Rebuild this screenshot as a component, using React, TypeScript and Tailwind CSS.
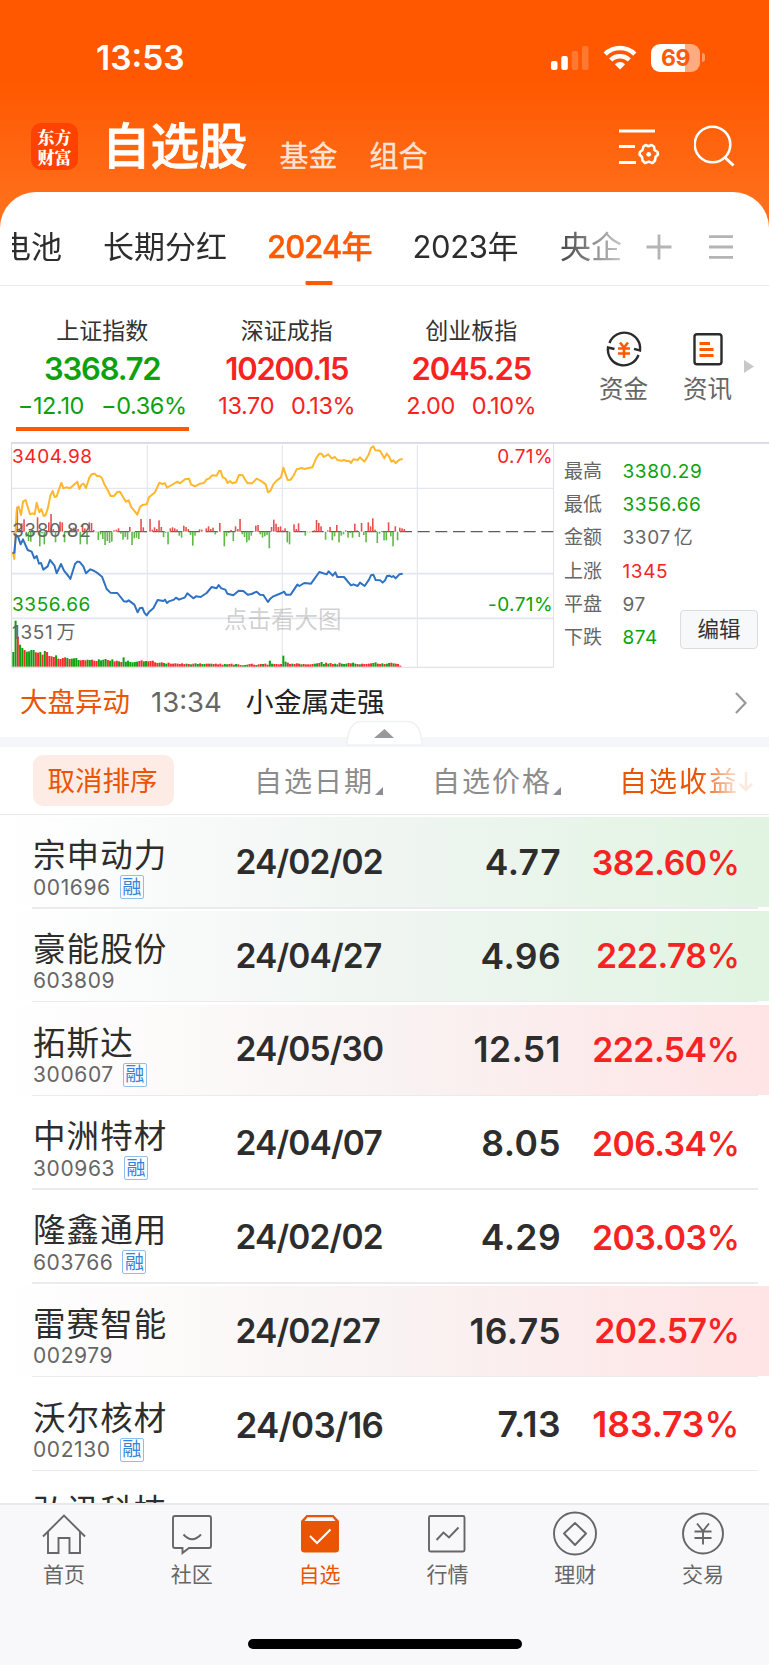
import React, { useState } from "react";

type Tone = "up" | "down" | "flat";

interface IndexItem {
  name: string;
  value: string;
  change: string;
  percent: string;
  tone: Tone;
}

interface Stock {
  name: string;
  code: string;
  margin: boolean;
  date: string;
  price: string;
  profit: string;
  flash?: "green" | "red";
}

const toneText = {
  up: "text-[#f72323]",
  down: "text-[#0da10d]",
  flat: "text-[#666]",
};

const indices: IndexItem[] = [
  { name: "上证指数", value: "3368.72", change: "−12.10", percent: "−0.36%", tone: "down" },
  { name: "深证成指", value: "10200.15", change: "13.70", percent: "0.13%", tone: "up" },
  { name: "创业板指", value: "2045.25", change: "2.00", percent: "0.10%", tone: "up" },
];

const stats: { label: string; value: string; unit?: string; tone: Tone }[] = [
  { label: "最高", value: "3380.29", tone: "down" },
  { label: "最低", value: "3356.66", tone: "down" },
  { label: "金额", value: "3307", unit: "亿", tone: "flat" },
  { label: "上涨", value: "1345", tone: "up" },
  { label: "平盘", value: "97", tone: "flat" },
  { label: "下跌", value: "874", tone: "down" },
];

const stocks: Stock[] = [
  { name: "宗申动力", code: "001696", margin: true, date: "24/02/02", price: "4.77", profit: "382.60", flash: "green" },
  { name: "豪能股份", code: "603809", margin: false, date: "24/04/27", price: "4.96", profit: "222.78", flash: "green" },
  { name: "拓斯达", code: "300607", margin: true, date: "24/05/30", price: "12.51", profit: "222.54", flash: "red" },
  { name: "中洲特材", code: "300963", margin: true, date: "24/04/07", price: "8.05", profit: "206.34" },
  { name: "隆鑫通用", code: "603766", margin: true, date: "24/02/02", price: "4.29", profit: "203.03" },
  { name: "雷赛智能", code: "002979", margin: false, date: "24/02/27", price: "16.75", profit: "202.57", flash: "red" },
  { name: "沃尔核材", code: "002130", margin: true, date: "24/03/16", price: "7.13", profit: "183.73" },
];

// chart units: three per pixel
const leadLine =
  "38,350 43,372 50,225 56,215 63,240 69,200 77,195 83,215 90,238 98,235 104,238 110,203 118,232 124,222 131,243 137,240 144,218 151,182 158,168 164,186 170,184 178,160 184,143 190,160 198,157 210,160 232,140 238,162 245,148 251,146 258,159 268,128 275,118 284,116 291,123 298,123 306,129 313,148 320,160 332,183 342,183 352,171 360,170 366,181 378,200 386,196 393,215 412,239 420,216 427,210 440,208 447,187 465,172 478,143 487,147 495,145 501,158 520,147 532,140 540,145 555,133 567,131 573,148 585,154 600,146 612,144 620,133 628,130 636,121 650,122 657,108 662,107 668,127 676,130 683,144 690,138 697,145 708,142 717,120 728,121 736,135 743,145 756,145 770,131 785,139 797,148 804,172 812,166 820,148 830,137 843,127 850,98 863,135 872,134 880,123 890,103 905,99 913,102 937,97 948,71 958,56 965,56 971,66 985,58 995,70 1005,66 1012,75 1025,77 1032,75 1040,78 1048,78 1053,84 1060,73 1073,75 1080,67 1093,80 1106,59 1113,39 1120,34 1126,46 1140,47 1153,70 1160,56 1167,64 1174,80 1180,76 1187,84 1198,74 1208,72";
const indexLine =
  "38,355 43,353 48,300 54,305 62,328 69,313 83,345 95,350 103,370 110,363 117,386 123,384 130,404 143,394 150,375 163,391 170,415 183,387 192,407 205,423 211,432 225,387 232,380 238,380 250,394 258,415 271,403 283,408 295,416 306,425 320,462 331,473 352,474 372,499 380,500 386,496 403,509 413,532 419,520 427,518 433,533 440,541 447,531 460,520 473,495 490,498 495,494 501,504 507,499 522,494 528,488 537,494 555,487 562,475 580,490 588,484 602,486 620,474 635,456 650,460 656,450 664,460 676,464 682,476 700,481 716,467 730,468 743,479 755,477 770,470 780,479 790,480 804,501 811,491 820,484 845,474 852,470 858,479 872,479 892,449 898,453 913,444 933,446 958,411 980,418 986,409 998,422 1006,412 1012,426 1032,426 1053,451 1060,448 1073,453 1080,443 1094,453 1107,434 1113,421 1120,419 1127,435 1141,436 1148,443 1155,436 1161,423 1168,422 1175,426 1180,423 1187,430 1198,418 1208,416";

const ticks = [
  0, 0, 75, 0, 25, 37, -15, -28, -30, -10, 0, 43, -44, -5, -38, 5, 28, 53, 8, -32, 0, 30, 28, -32, -3, -10, 10, 12, 15, 8,
  -38, 20, 10, -38, 28, 26, 5, -2, -25, -8, -22, -40, -28, -34, -30, 4, 6, 10, -6, -24, -16, -24, 14, -40, -20, -18, -22,
  38, 13, -2, 0, 38, 6, 13, 8, 34, 14, -16, -3, -38, 10, 13, 10, 7, -12, -18, 18, 14, 8, -10, -42, -12, 0, 7, 6, 0, 10, 16,
  8, 12, -8, -2, 26, 0, -44, -14, -4, 5, -28, 16, 8, 38, -8, -16, -32, -26, -12, 2, 18, 20, -8, -18, -14, -10, -50, 14, 36,
  24, 14, 16, 4, 10, -32, -38, 0, 22, 8, 25, 0, 2, -12, -2, -2, 0, 4, 35, 26, 16, 0, -24, 4, 14, -26, -14, 20, -32, -12, -8,
  4, -18, -4, -18, 24, 4, -16, 26, -10, -32, 28, 16, 40, 6, -34, -6, 2, -26, -26, 28, -14, -44, 16, -26, 12, 10, 8,
];

const volumes = [
  44, 138, 90, 66, 56, 50, 45, 46, 50, 50, 43, 42, 44, 36, 47, 44, 32, 31, 29, 34, 24, 23, 26, 28, 26, 23, 24, 25, 26, 20, 19,
  20, 19, 21, 20, 21, 18, 17, 22, 19, 21, 23, 20, 18, 22, 16, 18, 16, 14, 28, 15, 18, 14, 13, 14, 15, 17, 19, 16, 17, 16, 17,
  18, 13, 11, 12, 13, 11, 9, 12, 9, 9, 10, 9, 8, 10, 8, 9, 8, 7, 9, 10, 8, 10, 8, 8, 9, 9, 9, 8, 9, 7, 9, 6, 8, 7, 8, 9, 6,
  8, 7, 5, 4, 5, 6, 8, 9, 6, 5, 7, 8, 8, 9, 6, 18, 9, 8, 8, 7, 8, 33, 15, 12, 8, 9, 8, 10, 9, 7, 8, 7, 7, 7, 8, 9, 10, 11, 14,
  8, 12, 9, 11, 8, 9, 7, 12, 9, 8, 9, 11, 10, 12, 9, 8, 7, 9, 8, 8, 9, 10, 11, 13, 9, 8, 10, 8, 9, 11, 12, 10, 9, 8, 3,
];
// which minutes closed lower, one letter per bar
const volumeTones =
  "ggrggrggggrrgrgrrrrgrrrrgrggggrrrggrrrggggrggrrgrgggggggrrggrrrrrgrggrrrrrrrrgrgrggrggrrgrrrrrggrrggrrgggrrrgrrgrrggrrrrggrrgrrrgrrrrrggrggrgrrggrgggrrggrgrrrrrggrrgrggrgrr";

function MarketChart() {
  return (
    <svg className="block w-[543px] h-[226px]" viewBox="33 21 1629 678" fill="none">
      <path d="M442 30V698M847 30V698M1252 30V698M34 160H1660" stroke="#e4e5ee" strokeWidth="3.500" />
      <path d="M34 416H1660M34 550H1660" stroke="#e4e5ee" strokeWidth="5" />
      <path d="M34.500 24V697H1661V24" stroke="#dbdce6" strokeWidth="3" />
      <path d="M34 290H1660" stroke="#5c5c5c" strokeWidth="3.500" strokeDasharray="36 17" />
      {ticks.map((t, i) =>
        t === 0 ? null : (
          <rect
            key={i}
            x={36 + i * 6.75}
            y={t > 0 ? 290 - t : 290}
            width="4.800"
            height={Math.abs(t)}
            fill={t > 0 ? "#ea4f4f" : "#5fb946"}
          />
        )
      )}
      {volumes.map((v, i) => (
        <rect
          key={i}
          x={37 + i * 6.75}
          y={695 - v}
          width="6"
          height={v}
          fill={volumeTones[i] === "g" ? "#0da10d" : "#f52c2c"}
        />
      ))}
      <polyline points={leadLine} stroke="#ffb72b" strokeWidth="6" strokeLinejoin="round" />
      <polyline points={indexLine} stroke="#2f72c4" strokeWidth="6" strokeLinejoin="round" />
    </svg>
  );
}

const StatusBar = () => (
  <div className="flex h-[114px] items-center pl-[96px] pr-[64px] pt-[1px] text-white">
    <span className="mt-[2px] text-[33.500px] leading-none font-semibold">13:53</span>
    <div className="ml-auto flex items-center">
      <svg className="w-[38px] h-[24px]" viewBox="0 0 38 24" fill="#fff">
        <rect x="0" y="15" width="6.500" height="9" rx="2" />
        <rect x="10.300" y="10" width="6.500" height="14" rx="2" />
        <rect x="20.700" y="5" width="6.500" height="19" rx="2" opacity=".2" />
        <rect x="31" y="0" width="6.500" height="24" rx="2" opacity=".2" />
      </svg>
      <svg className="ml-[14px] w-[34px] h-[25px]" viewBox="0 0 34 25" fill="none" stroke="#fff" strokeWidth="4.500">
        <path d="M2.200 9.200A21 21 0 0 1 31.800 9.200" />
        <path d="M7.700 15A13.200 13.200 0 0 1 26.300 15" />
        <path d="M17 24.500L11.800 19.200Q17 15 22.200 19.200Z" fill="#fff" stroke="none" />
      </svg>
      <div className="ml-[14px] flex h-[28px] w-[49px] items-center justify-center rounded-[9px] bg-[linear-gradient(to_right,#fff_70%,#ffab80_70%)]">
        <span className="mt-[1px] text-[23px] leading-none font-bold tracking-[-0.5px] text-[#ff5a05]">69</span>
      </div>
      <div className="ml-[2px] h-[9px] w-[3px] rounded-r-full bg-[#ff9a66]" />
    </div>
  </div>
);

const TopBar = () => (
  <div className="flex h-[78px] items-start pl-[31px] pr-[31px]">
    <div className="mt-[9px] flex h-[47px] w-[47px] shrink-0 flex-col items-center justify-center rounded-[10px] bg-[#ff4200] font-['Noto_Serif_CJK_SC','Noto_Sans_CJK_SC',serif] text-[17px] leading-[20px] font-black text-white">
      <span>东方</span>
      <span>财富</span>
    </div>
    <span className="ml-[24px] mt-[9px] text-[48.500px] leading-[48px] font-medium text-white [-webkit-text-stroke:0.8px_#fff]">
      自选股
    </span>
    <span className="ml-[32px] mt-[28px] text-[29px] leading-[29px] text-white/80 [-webkit-text-stroke:0.3px_rgba(255,255,255,0.8)]">
      基金
    </span>
    <span className="ml-[32px] mt-[28px] text-[29px] leading-[29px] text-white/80 [-webkit-text-stroke:0.3px_rgba(255,255,255,0.8)]">
      组合
    </span>
    <svg className="ml-auto mt-[12px] h-[42px] w-[42px]" viewBox="0 0 42 42" fill="none" stroke="#fff" strokeWidth="2.800">
      <path d="M0 5H36M0 20.500H16M0 36.500H17" />
      <path
        d="M26.500 19L29.500 20.200L32.500 19L35 20.500L35.500 24L38.500 26L39 28.500L36.500 31L36 34.500L33.500 37L29.800 35.600L26 37L23.500 34.500L23 31L20.500 28.500L21 26L23.500 24L24.500 20.500Z"
        strokeWidth="2.600"
        strokeLinejoin="round"
      />
      <circle cx="29.700" cy="28.300" r="2.400" fill="#fff" stroke="none" />
    </svg>
    <svg className="ml-[33px] mt-[10px] h-[44px] w-[44px]" viewBox="0 0 44 44" fill="none" stroke="#fff" strokeWidth="2.600">
      <circle cx="18.500" cy="20.500" r="17.800" />
      <path d="M30.500 33L39.500 41.500" strokeWidth="3" />
    </svg>
  </div>
);

const GroupTabs = () => {
  const [active, setActive] = useState("2024年");

  return (
    <div className="flex h-[94px] items-center border-b border-[#ececee] pt-[16px]">
      <div className="ml-[12px] flex h-full w-[610px] items-center overflow-hidden text-[31px] leading-none text-[#2d2d2d] [mask-image:linear-gradient(to_right,#000_88%,rgba(0,0,0,0.25)_100%)]">
        <span className="-ml-[12px] shrink-0">电池</span>
        {["长期分红", "2024年", "2023年", "央企"].map((tab) => (
          <button
            key={tab}
            onClick={() => setActive(tab)}
            className={
              tab === active
                ? "relative ml-[40px] flex h-full shrink-0 items-center font-medium tracking-[-0.9px] text-[#ff5a00] [-webkit-text-stroke:0.4px_#ff5a00]"
                : "ml-[41px] flex h-full shrink-0 items-center"
            }
          >
            <span className={tab === "2023年" ? "mr-[1px] tracking-[-0.4px]" : ""}>{tab}</span>
            {tab === active && (
              <span className="absolute bottom-0 left-1/2 h-[4px] w-[27px] -translate-x-1/2 rounded-[1px] bg-[#ff5a00]" />
            )}
          </button>
        ))}
      </div>
      <svg className="ml-[24px] h-[26px] w-[26px]" viewBox="0 0 26 26" stroke="#b4b4b4" strokeWidth="2.800">
        <path d="M13 .5V25.500M.5 13H25.500" />
      </svg>
      <svg className="ml-[37px] h-[26px] w-[24px]" viewBox="0 0 24 26" stroke="#b4b4b4" strokeWidth="2.800">
        <path d="M0 2.700H24M0 13H24M0 23.300H24" />
      </svg>
    </div>
  );
};

const IndexStrip = () => (
  <div className="flex h-[156px] pl-[10px]">
    {indices.map((item, i) => (
      <div key={item.name} className="flex w-[184.500px] flex-col items-center pt-[33px]">
        <span className="text-[23px] leading-[24px] text-[#333]">{item.name}</span>
        <span className={`mt-[10px] text-[31px] leading-[31px] font-semibold tracking-[-1.200px] ${toneText[item.tone]}`}>
          {item.value}
        </span>
        <div className={`mt-[10px] flex gap-[17px] text-[23.500px] leading-[24px] tracking-[-0.4px] ${toneText[item.tone]}`}>
          <span>{item.change}</span>
          <span>{item.percent}</span>
        </div>
        {i === 0 && <div className="mt-[9px] h-[4px] w-[173px] bg-[#ff5a00]" />}
      </div>
    ))}
    <div className="ml-[18px] flex w-[84px] flex-col items-center pt-[44px] text-[24.500px] leading-[26px] text-[#666]">
      <svg className="h-[38px] w-[38px]" viewBox="0 0 38 38" fill="none" stroke="#2b2b2b" strokeWidth="2.400">
        <path d="M4.500 13A15.800 15.800 0 0 1 35 20.500L29 18.800" />
        <path d="M33.500 25A15.800 15.800 0 0 1 3 17.500L9.500 19" />
        <path d="M15 12.500L19 17.500L23 12.500M13 18.500H25M13 23.500H25M19 17.500V28" stroke="#ff5a00" strokeWidth="2.600" />
      </svg>
      <span className="mt-[8px]">资金</span>
    </div>
    <div className="flex w-[84px] flex-col items-center pt-[44px] text-[24.500px] leading-[26px] text-[#666]">
      <svg className="h-[38px] w-[38px]" viewBox="0 0 38 38" fill="none" stroke="#2b2b2b" strokeWidth="2.400">
        <rect x="5.500" y="4.200" width="27" height="30" rx="2.500" />
        <path d="M10.500 13.500H21M10.500 19.500H24.500M10.500 25.500H24.500" stroke="#ff5a00" strokeWidth="2.800" />
      </svg>
      <span className="mt-[8px]">资讯</span>
    </div>
    <svg className="-ml-[6px] mt-[74px] h-[13px] w-[10px]" viewBox="0 0 10 13" fill="#c8c8c8">
      <path d="M0 0L10 6.500L0 13Z" />
    </svg>
  </div>
);

const MarketPanel = () => (
  <div className="ml-[11px] flex h-[226px] border-t-2 border-[#dcdce6] text-[19px] leading-[19px]">
    <div className="relative -mt-[2px] w-[543px] shrink-0">
      <MarketChart />
      <span className="absolute left-[1px] top-[5px] tracking-[0.6px] text-[#f72323]">3404.98</span>
      <span className="absolute left-[1px] top-[79px] tracking-[0.6px] text-[#666]">3380.82</span>
      <span className="absolute left-[1px] top-[153px] tracking-[0.6px] text-[#0da10d]">3356.66</span>
      <span className="absolute left-[1px] top-[181px] tracking-[0.7px] text-[#666]">
        1351<span className="ml-[3px]">万</span>
      </span>
      <span className="absolute right-[1px] top-[5px] tracking-[0.4px] text-[#f72323]">0.71%</span>
      <span className="absolute right-[1px] top-[153px] tracking-[0.4px] text-[#0da10d]">-0.71%</span>
      <span className="absolute left-[213px] top-[166px] text-[23.500px] leading-[24px] text-[#9a9a9a]/45">点击看大图</span>
    </div>
    <div className="relative ml-[10px] flex-1 pt-[11px]">
      {stats.map((s) => (
        <div key={s.label} className="flex h-[33.200px] items-center">
          <span className="w-[58.500px] text-[#666]">{s.label}</span>
          <span className={`tracking-[0.6px] ${toneText[s.tone]}`}>
            {s.value}
            {s.unit && <span className="ml-[3px]">{s.unit}</span>}
          </span>
        </div>
      ))}
      <button className="absolute left-[116px] top-[166px] h-[39px] w-[78px] rounded-[4px] border border-[#dcdde2] bg-[#f7f8fa] text-[21.500px] text-[#333]">
        编辑
      </button>
    </div>
  </div>
);

const NewsRow = () => (
  <div className="relative">
    <div className="flex h-[69px] items-center pl-[20px] pr-[22px] text-[27.500px] leading-none">
      <span className="text-[#ea5504]">大盘异动</span>
      <span className="ml-[21px] text-[#666]">13:34</span>
      <span className="ml-[24px] text-[27.800px] text-[#222]">小金属走强</span>
      <svg className="ml-auto h-[22px] w-[12px]" viewBox="0 0 12 22" fill="none" stroke="#999" strokeWidth="2.200">
        <path d="M1 1L10.500 11L1 21" />
      </svg>
    </div>
    <div className="h-[10px] bg-[#f5f6fa]" />
    {/* collapse handle over the grey band */}
    <svg className="absolute bottom-0 left-[346px] h-[27px] w-[77px]" viewBox="0 0 77 27">
      <path d="M1 25Q2 2 15 1.500H62Q75 2 76 25Z" fill="#fff" stroke="#f0f1f4" strokeWidth="1.500" />
      <path d="M28 18L38.500 9L48 18Z" fill="#999" />
    </svg>
  </div>
);

const Corner = () => (
  <svg className="ml-[1px] mt-[19px] h-[8px] w-[8px]" viewBox="0 0 8 8" fill="#8c8c94">
    <path d="M8 0V8H0Z" />
  </svg>
);

const ListHead = () => (
  <div className="flex h-[68px] items-center border-b border-[#e9e9ec] text-[28px] leading-none tracking-[2px] text-[#8c8c8c]">
    <button className="ml-[33px] flex h-[51px] w-[141px] items-center justify-center rounded-[10px] bg-[#fdece5] pr-[2px] pt-[2px] text-[27.500px] tracking-normal text-[#ea5504]">
      取消排序
    </button>
    <div className="ml-[80px] flex items-center pt-[2px]">
      自选日期
      <Corner />
    </div>
    <div className="ml-[49px] flex items-center pt-[2px]">
      自选价格
      <Corner />
    </div>
    <div className="ml-[58px] flex items-center pt-[2px] text-[#ea5504] [mask-image:linear-gradient(to_right,#000_60%,rgba(0,0,0,0.12)_90%)]">
      自选收益
      <svg className="h-[20px] w-[14px]" viewBox="0 0 14 20" fill="none" stroke="#ea5504" strokeWidth="2.600">
        <path d="M7 0V18M1 12L7 18L13 12" />
      </svg>
    </div>
  </div>
);

const flashBg = {
  green: "bg-linear-to-r from-white via-[#f0f5f2] to-[#e0f4e1]",
  red: "bg-linear-to-r from-white via-[#f9f3f3] to-[#ffe4e5]",
};

const dateSize = (v: string) =>
  v.includes("1") ? "text-[35px] tracking-[-0.75px]" : "text-[33.500px] tracking-[-0.85px]";
const profitSize = (v: string) =>
  v.includes("1") ? "text-[35.500px] tracking-[-0.1px]" : "text-[33.800px] tracking-[-0.55px]";

function StockRow({ stock }: { stock: Stock }) {
  return (
    <div className="h-[93.750px] shrink-0 pt-[2px]">
      <div className={`flex h-[90px] ${stock.flash ? flashBg[stock.flash] : ""}`}>
        <div className="w-[204px] pl-[33px] pt-[22px]">
          <div className="text-[32.500px] leading-[34px] tracking-[1.100px] text-[#2d2d2d]">{stock.name}</div>
          <div className="mt-[2px] flex h-[24px] items-center text-[21px] leading-none text-[#666]">
            <span className="tracking-[0.6px]">{stock.code}</span>
            {stock.margin && (
              <span className="ml-[9px] flex h-[24px] w-[24px] items-center justify-center rounded-[2px] border-[1.500px] border-[#8fbdf0] text-[19px] text-[#3583dd]">
                融
              </span>
            )}
          </div>
        </div>
        <div className="flex h-[90px] flex-1 items-center pt-[1px] leading-none font-semibold text-[#2d2d2d]">
          <span className={`ml-[31.500px] w-[150px] ${dateSize(stock.date)}`}>{stock.date}</span>
          <span className="w-[175.500px] text-right text-[35.500px] tracking-[0.4px]">{stock.price}</span>
          <span className={`w-[178.500px] text-right text-[#f72323] ${profitSize(stock.profit)}`}>
            {stock.profit}
            <span className="font-medium">%</span>
          </span>
        </div>
      </div>
      <div className="ml-[32px] mr-[11px] h-[1.500px] bg-[#ebebed]" />
    </div>
  );
}

const navItems = [
  {
    label: "首页",
    icon: (
      <path d="M1 22.500L22 1.500L43 22.500M6 18V39H16.500V24H27.500V39H38V18" />
    ),
  },
  {
    label: "社区",
    icon: (
      <>
        <path d="M5 2H39Q41 2 41 4V32Q41 34 39 34H19L12.500 39V34H5Q3 34 3 32V4Q3 2 5 2Z" />
        <path d="M13.500 20.500Q22 30 31 20.500" />
      </>
    ),
  },
  {
    label: "自选",
    icon: (
      <>
        <path d="M8.500 1H35.500L41 7V35Q41 38.500 37.500 38.500H6.500Q3 38.500 3 35V7Z" fill="#ea5504" stroke="none" />
        <path d="M9.500 3.300H34.500L37.500 7H6.500Z" fill="#f8f8fa" stroke="none" />
        <path d="M12 22L19 29L32.500 15.500" stroke="#fff" strokeWidth="2" />
      </>
    ),
  },
  {
    label: "行情",
    icon: (
      <>
        <rect x="4" y="2" width="35.500" height="35.500" rx="1.500" />
        <path d="M11.500 26L18.500 18.500L24 23.500L33.500 13.500" />
      </>
    ),
  },
  {
    label: "理财",
    icon: (
      <>
        <circle cx="22" cy="19.500" r="21" />
        <path d="M22 9L33 19.500L22 31L11 19.500Z" strokeLinejoin="round" />
      </>
    ),
  },
  {
    label: "交易",
    icon: (
      <>
        <circle cx="22" cy="19.500" r="20" />
        <path d="M16 9.500L22 17L28 9.500M13.500 17.500H30.500M13.500 24H30.500M22 17V30.500" />
      </>
    ),
  },
];

const BottomNav = () => (
  <div className="flex h-[162px] shrink-0 flex-col border-t-2 border-[#e9e9ec] bg-[#f8f8fa]">
    <div className="mr-[2px] grid grid-cols-6">
      {navItems.map((item) => (
        <button
          key={item.label}
          className={
            item.label === "自选"
              ? "flex flex-col items-center pt-[9px] text-[21px] leading-[22px] text-[#ea5504]"
              : "flex flex-col items-center pt-[9px] text-[21px] leading-[22px] text-[#666]"
          }
        >
          <svg
            className="h-[40px] w-[44px] overflow-visible"
            viewBox="0 0 44 40"
            fill="none"
            stroke="#666"
            strokeWidth="1.900"
          >
            {item.icon}
          </svg>
          <span className="mt-[10px]">{item.label}</span>
        </button>
      ))}
    </div>
    <div className="mx-auto mt-auto mb-[16px] h-[10px] w-[274px] rounded-full bg-black" />
  </div>
);

const App = () => {
  return (
    <div className="flex h-[1665px] w-[769px] flex-col overflow-hidden bg-[linear-gradient(to_bottom,#ff5800_80px,#ff6e1a_200px)] font-['Inter','Noto_Sans_CJK_SC',sans-serif]">
      <StatusBar />
      <TopBar />
      <div className="flex min-h-0 flex-1 flex-col overflow-hidden rounded-t-[36px] bg-white">
        <GroupTabs />
        <IndexStrip />
        <MarketPanel />
        <NewsRow />
        <ListHead />
        <div className="flex min-h-0 flex-1 flex-col overflow-hidden">
          {stocks.map((stock) => (
            <StockRow key={stock.code} stock={stock} />
          ))}
          <div className="shrink-0 pl-[33px] pt-[24px] text-[32.500px] leading-[34px] tracking-[1.100px] text-[#2d2d2d]">
            弘讯科技
          </div>
        </div>
      </div>
      <BottomNav />
    </div>
  );
};

export default App;
